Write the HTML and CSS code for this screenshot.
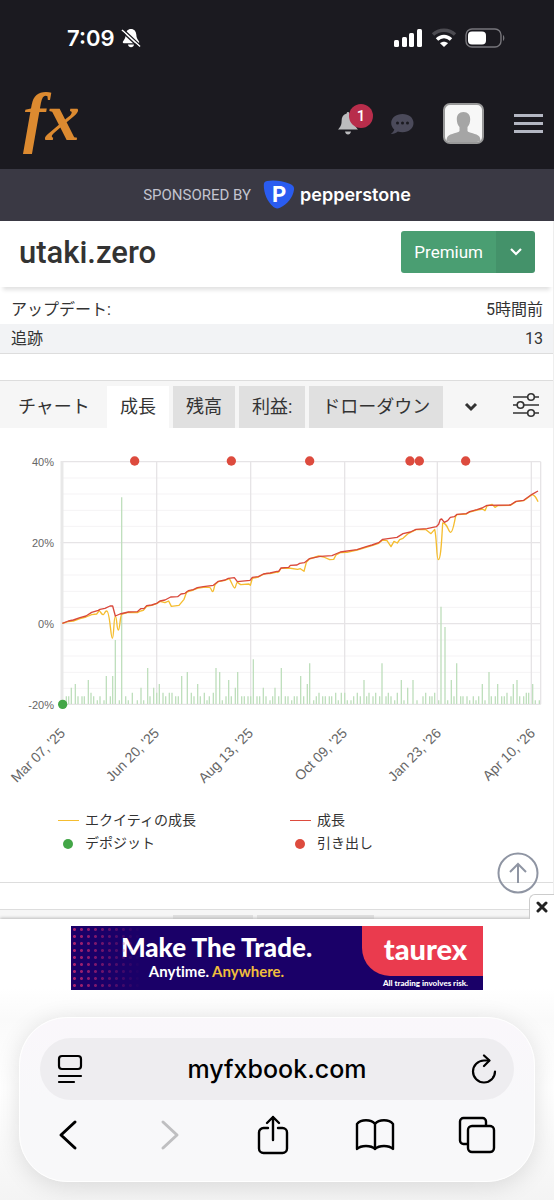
FILE: index.html
```html
<!DOCTYPE html>
<html lang="ja">
<head>
  <meta charset="UTF-8">
  <meta name="viewport" content="width=device-width, initial-scale=1.0">
  <title>utaki.zero - myfxbook</title>
  <link rel="stylesheet" href="styles.css">
</head>
<body>
  <!-- Status bar -->
  <div class="status-bar">
    <div class="status-left">
      <span class="time">7:09</span>
      <svg width="20" height="20" viewBox="0 0 20 20" fill="#fff">
        <path d="M10 1c-3.300 0-5 2.300-5.300 5.600C4.500 10 3.800 11 2 13.600c-.5.8-.2 1.600.8 1.600h14.400c1 0 1.300-.8.8-1.600-1.800-2.600-2.500-3.600-2.700-7C15 3.300 13.300 1 10 1z"/>
        <path d="M7 16.600h6c-.3 1.800-1.400 2.700-3 2.700s-2.700-.9-3-2.700z"/>
        <path d="M2 1.200l17 16" stroke="#1b1a20" stroke-width="1.600"/>
        <path d="M1 2l18 16.500" stroke="#fff" stroke-width="1.600"/>
        <path d="M1 4l17 15.700" stroke="#1b1a20" stroke-width="1.400"/>
      </svg>
    </div>
    <div class="status-right">
      <svg width="30" height="20" viewBox="0 0 30 20" fill="#fff">
        <rect x="1" y="12" width="5" height="7" rx="1.500"/>
        <rect x="9" y="9" width="5" height="10" rx="1.500"/>
        <rect x="16" y="5" width="5" height="14" rx="1.500"/>
        <rect x="24" y="1" width="5" height="18" rx="1.500"/>
      </svg>
      <svg width="26" height="20" viewBox="0 0 26 20" fill="none">
        <path d="M2 6.500C8 .8 18 .8 24 6.500" stroke="#4c4b51" stroke-width="3.400"/>
        <path d="M6 11.500c4-4 10-4 14 0" stroke="#fff" stroke-width="3.400"/>
        <path d="M9 15.200c2.400-2 5.600-2 8 0L13 19z" fill="#fff"/>
      </svg>
      <svg width="40" height="20" viewBox="0 0 40 20" fill="none">
        <rect x="1" y="1" width="35" height="18" rx="6" stroke="#77767b" stroke-width="1.400"/>
        <rect x="3" y="3.500" width="18" height="13" rx="4" fill="#fff"/>
        <path d="M38 7v6c1.800-.8 1.800-5.200 0-6z" fill="#77767b"/>
      </svg>
    </div>
  </div>

  <!-- Header -->
  <header class="header">
    <a href="#" class="logo">fx</a>
    <nav class="header-nav">
      <button class="icon-btn bell-btn" aria-label="通知">
        <svg width="22" height="26" viewBox="0 0 22 26" fill="#bcbcbe">
          <path d="M11 1c-.8 0-1.300.6-1.300 1.400C6.300 3.200 4.600 6 4.600 10c0 4.500-1.500 6-3.600 8.600h20c-2.100-2.600-3.600-4.100-3.600-8.600 0-4-1.700-6.800-5.100-7.600C12.300 1.600 11.800 1 11 1z"/>
          <path d="M8 20.500h6c-.4 2-1.500 3-3 3s-2.600-1-3-3z"/>
        </svg>
        <span class="badge">1</span>
      </button>
      <button class="icon-btn chat-btn" aria-label="メッセージ">
        <svg width="24" height="22" viewBox="0 0 24 22">
          <path d="M12.500 1C6 1 1.200 4.800 1.200 10c0 2.600 1.200 4.900 3.100 6.500C3.800 18.300 2.500 19.800.8 21c3 .1 5.300-.8 7-2.400 1.500.4 3 .6 4.700.6C19 19.200 23.500 15.200 23.500 10S19 1 12.500 1z" fill="#4b4a5a"/>
          <circle cx="7.500" cy="10" r="1.500" fill="#1b1a20"/>
          <circle cx="12.500" cy="10" r="1.500" fill="#1b1a20"/>
          <circle cx="17.500" cy="10" r="1.500" fill="#1b1a20"/>
        </svg>
      </button>
      <a href="#" class="avatar" aria-label="プロフィール">
        <svg width="37" height="37" viewBox="0 0 37 37" fill="#a5a5a5">
          <path d="M18.500 7c-4.400 0-6.700 3-6.700 7.200 0 3.300 1 6 2.700 7.800v4c-.8 2-9.300 2.400-11.800 5.400-.8 1.300-1.300 3.100-1.400 5.600h34.400c-.1-2.500-.6-4.300-1.400-5.600-2.500-3-11-3.400-11.800-5.400v-4c1.700-1.800 2.700-4.500 2.700-7.800C25.200 10 22.900 7 18.500 7z"/>
        </svg>
      </a>
      <button class="icon-btn menu-btn" aria-label="メニュー">
        <span></span><span></span><span></span>
      </button>
    </nav>
  </header>

  <!-- Sponsor -->
  <div class="sponsor">
    <span>SPONSORED BY</span>
    <a href="#" class="sponsor-link">
      <span class="sponsor-mark">
        <svg width="32" height="30" viewBox="0 0 32 30" fill="#2a5cf0">
          <path d="M4 1c6-1.200 15-.5 22 2.500 4 1.600 5.500 3.200 5 6.200-1 7.300-6.500 14.800-14 18-2.500 1.100-4.500.9-6.500-.7C4 21.500.8 13 .8 5 .8 2.500 1.800 1.400 4 1z"/>
        </svg>
        <b>P</b>
      </span>
      <span class="sponsor-name">pepperstone</span>
    </a>
  </div>

  <main class="page">
    <div class="title-bar">
      <h1>utaki.zero</h1>
      <div class="premium">
        <button class="premium-main">Premium</button>
        <button class="premium-toggle" aria-label="Premium メニュー">
          <svg width="14" height="10" viewBox="0 0 14 10" fill="none" stroke="#fff" stroke-width="2.200">
            <path d="M2 2l5 5 5-5"/>
          </svg>
        </button>
      </div>
    </div>

    <dl class="info">
      <div class="info-row"><dt>アップデート:</dt><dd>5時間前</dd></div>
      <div class="info-row striped"><dt>追跡</dt><dd>13</dd></div>
    </dl>

    <section class="panel">
      <div class="tabs">
        <h2>チャート</h2>
        <button class="tab active">成長</button>
        <button class="tab">残高</button>
        <button class="tab">利益:</button>
        <button class="tab">ドローダウン</button>
        <button class="tab-more" aria-label="その他">
          <svg width="14" height="10" viewBox="0 0 14 10" fill="none" stroke="#333" stroke-width="3">
            <path d="M2 2l5 5 5-5"/>
          </svg>
        </button>
        <button class="tab-settings" aria-label="設定">
          <svg width="28" height="26" viewBox="0 0 28 26" fill="none" stroke="#333" stroke-width="1.600">
            <path d="M1 5h14M23 5h4M1 13h4M12 13h15M1 21h14M23 21h4"/>
            <circle cx="19" cy="5" r="3.300"/>
            <circle cx="8.500" cy="13" r="3.300"/>
            <circle cx="19" cy="21" r="3.300"/>
          </svg>
        </button>
      </div>

      <svg class="chart" viewBox="0 0 553 371">
        <svg x="0" y="7" width="554" height="280" viewBox="0 0 1662 840" fill="none">
          <!-- grid -->
          <path class="grid-minor" d="M188 129H1622M188 177H1622M188 226H1622M188 274H1622M188 372H1622M188 420H1622M188 469H1622M188 517H1622M188 615H1622M188 663H1622M188 712H1622M188 760H1622"/>
          <path class="grid-major" d="M182 80H1622M182 323H1622M182 566H1622M182 808H1622M470 80V808M752 80V808M1034 80V808M1312 80V808M1594 80V808M1622 80V808"/>
          <path class="axis" d="M186 80V808"/>
          <!-- bars -->
          <path class="bars" d="M199 807V784M206 807V784M214 807V758M226 807V747M234 807V784M246 807V784M253 807V784M265 807V735M273 807V773M281 807V784M292 807V796M300 807V784M312 807V796M319 807V723M331 807V784M338 807V723M346 807V615M358 807V796M365 807V187M377 807V784M385 807V796M397 807V773M412 807V796M423 807V758M431 807V796M443 807V699M450 807V784M461 807V758M470 807V773M478 807V747M489 807V773M497 807V784M508 807V773M516 807V773M527 807V784M535 807V784M545 807V723M562 807V711M574 807V773M582 807V784M593 807V747M601 807V784M613 807V773M621 807V796M628 807V784M640 807V773M648 807V699M659 807V711M667 807V796M678 807V784M686 807V735M694 807V784M706 807V758M713 807V711M725 807V784M733 807V784M744 807V784M752 807V784M760 807V673M771 807V784M779 807V784M790 807V758M798 807V784M810 807V796M818 807V784M825 807V758"/>
          <path class="bars" transform="translate(831 0)" d="M5 807V784M13 807V699M25 807V784M33 807V784M44 807V796M52 807V784M60 807V784M71 807V723M80 807V784M91 807V747M98 807V685M110 807V796M118 807V784M126 807V773M137 807V784M145 807V784M157 807V784M164 807V784M176 807V773M184 807V796M193 807V773M203 807V773M211 807V796M222 807V796M230 807V784M241 807V773M250 807V784M261 807V735M269 807V784M276 807V773M288 807V784M296 807V773M308 807V784M315 807V685M327 807V784M334 807V773M342 807V784M353 807V796M361 807V773M373 807V735M381 807V796M392 807V758M408 807V735M420 807V796M438 807V784M446 807V773M458 807V784M465 807V784M473 807V773M485 807V796M492 807V515M504 807V576M512 807V796M523 807V735M531 807V784M539 807V685M551 807V784M558 807V784M570 807V784M578 807V796M589 807V784M597 807V796M605 807V784M616 807V747M624 807V796M636 807V711M643 807V784M655 807V784M662 807V747M674 807V784M682 807V784M690 807V773M702 807V784M709 807V747M720 807V735M728 807V784M740 807V784M748 807V773M755 807V773M767 807V747M775 807V796M787 807V796"/>
          <!-- equity growth -->
          <path class="equity" d="M187 565L205 560 220 558 240 551 258 546 275 539 290 537 298 527C304 534 306 540 310 539S314 528 320 528C330 528 332 610 337 610S341 544 346 544 350 585 355 585 360 538 366 537L385 532 412 533 422 528 430 526 440 514 455 511 470 506 480 499 495 503 506 498 514 514 537 511 552 493 560 471 580 465 592 460 610 457 628 457C634 457 634 470 638 470S642 452 646 448L655 440 675 436 688 431C694 440 700 459 704 459S708 442 712 442L722 449 747 447 751 451 757 430 775 426 790 418 800 415 810 416 831 411"/>
          <path class="equity" transform="translate(831 0)" d="M0 413L5 411 12 400 35 399 62 403 70 401 81 409 88 382 97 372 125 363 140 366 158 374 170 373 177 360 190 353 210 352 240 345 270 336 285 332 305 325 317 315 330 317 342 335 351 319 361 324 368 314 378 310 392 297 417 284 445 283 462 296 473 283C480 310 478 374 484 374S493 340 497 264C512 264 514 292 521 292S532 260 536 244L540 239 568 237 578 231 600 225 617 222 624 227 630 213 645 208 654 217 662 212 700 211 717 200 740 197 765 179C774 180 777 187 783 200"/>
          <!-- growth -->
          <path class="growth" d="M187 565L205 558 220 555 240 548 258 543 275 532 295 526 300 523 315 520 330 513 338 513 346 543 360 537 385 531 412 530 422 521 432 521 440 512 455 510 470 505 480 498 495 495 512 486 533 485 543 477 555 475 565 467 580 464 592 458 610 455 640 451 655 439 675 435 685 430 703 428 712 440 750 436 757 427 775 425 790 417 810 414 831 409 836 409 843 399 866 397 871 391 891 390 899 385 913 383 928 371 961 364 996 362 1021 351 1071 344 1101 334 1116 330 1136 323 1148 313 1191 307 1209 296 1231 291 1248 283 1281 281 1309 275 1316 268 1321 253 1325 252 1333 262 1343 257 1351 247 1363 245 1371 238 1399 236 1409 230 1431 224 1446 219 1461 211 1531 210 1548 199 1571 196 1596 178 1614 168"/>
          <g class="withdrawals">
            <circle cx="404" cy="78" r="14"/>
            <circle cx="694" cy="78" r="14"/>
            <circle cx="929" cy="78" r="14"/>
            <circle cx="1230" cy="78" r="14"/>
            <circle cx="1258" cy="78" r="14"/>
            <circle cx="1397" cy="78" r="14"/>
          </g>
          <circle class="deposit" cx="188" cy="808" r="14"/>
        </svg>
        <g class="y-labels">
          <text x="54" y="38">40%</text>
          <text x="54" y="119">20%</text>
          <text x="54" y="200">0%</text>
          <text x="54" y="281">-20%</text>
        </g>
        <g class="x-labels">
          <text transform="translate(66 306) rotate(-45)">Mar 07, '25</text>
          <text transform="translate(160 306) rotate(-45)">Jun 20, '25</text>
          <text transform="translate(254 306) rotate(-45)">Aug 13, '25</text>
          <text transform="translate(348 306) rotate(-45)">Oct 09, '25</text>
          <text transform="translate(442 306) rotate(-45)">Jan 23, '26</text>
          <text transform="translate(536 306) rotate(-45)">Apr 10, '26</text>
        </g>
      </svg>

      <ul class="legend">
        <li><i class="line yellow"></i>エクイティの成長</li>
        <li><i class="line red"></i>成長</li>
        <li><i class="dot green"></i>デポジット</li>
        <li><i class="dot red"></i>引き出し</li>
      </ul>
    </section>

    <section class="panel">
      <div class="tabs">
        <span class="next-tab"></span>
        <span class="next-tab next-tab-wide"></span>
      </div>
    </section>
  </main>

  <!-- Bottom overlay: ad and browser bar -->
  <div class="bottom">
    <a href="#" class="to-top" aria-label="トップへ">
      <svg width="42" height="42" viewBox="0 0 42 42" fill="none" stroke="#8f95a3" stroke-width="2">
        <circle cx="21" cy="21" r="19.500"/>
        <path d="M21 31V12M13 20l8-8 8 8"/>
      </svg>
    </a>
    <button class="ad-close" aria-label="閉じる">
      <svg width="12" height="12" viewBox="0 0 12 12" stroke="#222" stroke-width="3" stroke-linecap="round">
        <path d="M2 2l8 8M10 2l-8 8"/>
      </svg>
    </button>

    <a href="#" class="ad">
      <span class="ad-dots"></span>
      <span class="ad-copy">
        <strong>Make The Trade.</strong>
        <span>Anytime. <em>Anywhere.</em></span>
      </span>
      <span class="ad-brand">
        <b>taurex</b>
        <small>All trading involves risk.</small>
      </span>
    </a>

    <div class="browser-bar">
      <div class="address">
        <button class="icon-btn" aria-label="ページメニュー">
          <svg width="26" height="30" viewBox="0 0 26 30" fill="none" stroke="#000" stroke-width="2.200" stroke-linecap="round">
            <rect x="2" y="2" width="22" height="13" rx="3"/>
            <path d="M2 22h22M2 28h15"/>
          </svg>
        </button>
        <span class="url">myfxbook.com</span>
        <button class="icon-btn" aria-label="再読み込み">
          <svg width="26" height="30" viewBox="0 0 26 30" fill="none" stroke="#000" stroke-width="2.200" stroke-linecap="round" stroke-linejoin="round">
            <path d="M24 17.500A11 11 0 1 1 13 6.500h5"/>
            <path d="M13 1.500l5.500 5-5.500 5.500"/>
          </svg>
        </button>
      </div>
      <div class="browser-nav">
        <button class="icon-btn" aria-label="戻る">
          <svg width="20" height="32" viewBox="0 0 20 32" fill="none" stroke="#000" stroke-width="3" stroke-linecap="round" stroke-linejoin="round">
            <path d="M17 3L3 16l14 13"/>
          </svg>
        </button>
        <button class="icon-btn" aria-label="進む" disabled>
          <svg width="20" height="32" viewBox="0 0 20 32" fill="none" stroke="#bfbfc1" stroke-width="3" stroke-linecap="round" stroke-linejoin="round">
            <path d="M3 3l14 13L3 29"/>
          </svg>
        </button>
        <button class="icon-btn" aria-label="共有">
          <svg width="32" height="40" viewBox="0 0 32 40" fill="none" stroke="#000" stroke-width="2.400" stroke-linecap="round" stroke-linejoin="round">
            <path d="M11 13H6.500A4.500 4.500 0 0 0 2 17.500v16A4.500 4.500 0 0 0 6.500 38h19a4.500 4.500 0 0 0 4.500-4.500v-16a4.500 4.500 0 0 0-4.500-4.500H21"/>
            <path d="M16 25V2M10 8l6-6 6 6"/>
          </svg>
        </button>
        <button class="icon-btn" aria-label="ブックマーク">
          <svg width="40" height="34" viewBox="0 0 40 34" fill="none" stroke="#000" stroke-width="2.400" stroke-linecap="round" stroke-linejoin="round">
            <path d="M20 6C16 1 6 1 2 6v25c4-4 14-4 18 0 4-4 14-4 18 0V6C34 1 24 1 20 6zM20 6v25"/>
          </svg>
        </button>
        <button class="icon-btn" aria-label="タブ">
          <svg width="38" height="38" viewBox="0 0 38 38" fill="none" stroke="#000" stroke-width="2.400" stroke-linejoin="round">
            <path d="M10 28H5.500A3.500 3.500 0 0 1 2 24.500v-19A3.500 3.500 0 0 1 5.500 2h19A3.500 3.500 0 0 1 28 5.500V10"/>
            <rect x="10" y="10" width="26" height="26" rx="4"/>
          </svg>
        </button>
      </div>
    </div>
  </div>
</body>
</html>
```
FILE: styles.css
```css
* {
  box-sizing: border-box;
}

body {
  margin: 0;
  font-family: Roboto, "Noto Sans CJK JP", sans-serif;
  background-color: #fff;
  color: #333;
}

a {
  color: inherit;
  text-decoration: none;
}

button {
  margin: 0;
  padding: 0;
  border: none;
  background: none;
  color: inherit;
  font-family: inherit;
  cursor: pointer;
}

svg {
  display: block;
}

.icon-btn {
  display: flex;
  align-items: center;
  justify-content: center;
}

/* Status bar */
.status-bar {
  display: flex;
  justify-content: space-between;
  align-items: center;
  height: 76px;
  padding: 0 49px 0 67px;
  background-color: #1b1a20;
  color: #fff;
}

.status-left,
.status-right {
  display: flex;
  align-items: center;
  gap: 6px;
}

.status-right {
  gap: 8px;
}

.time {
  font-family: Inter, sans-serif;
  font-size: 22px;
  font-weight: 600;
}

/* Header */
.header {
  display: flex;
  justify-content: space-between;
  align-items: center;
  height: 93px;
  padding: 0 11px 0 20px;
  background-color: #1b1a20;
}

.logo {
  padding: 0 0 12px 3px;
  color: #dc8a30;
  font-family: "Liberation Serif", serif;
  font-size: 68px;
  font-style: italic;
  font-weight: bold;
  line-height: 76px;
}

.header-nav {
  display: flex;
  align-items: center;
  padding-top: 2px;
}

.bell-btn {
  position: relative;
  margin-right: 31px;
}

.badge {
  position: absolute;
  top: -7px;
  left: 12px;
  width: 24px;
  height: 24px;
  border-radius: 50%;
  background-color: #b82d4b;
  color: #fff;
  font-size: 15px;
  font-weight: 500;
  line-height: 24px;
  text-align: center;
}

.chat-btn {
  margin-right: 29px;
}

.avatar {
  margin-right: 30px;
  border: 2px solid #999;
  border-radius: 7px;
  background-color: #f7f7f7;
  overflow: hidden;
}

.menu-btn {
  flex-direction: column;
  gap: 5px;
  width: 29px;
}

.menu-btn span {
  width: 100%;
  height: 3px;
  background-color: #b4b7c3;
}

/* Sponsor */
.sponsor {
  display: flex;
  justify-content: center;
  align-items: center;
  gap: 12px;
  height: 52px;
  background-color: #3a3944;
  color: #c3c4cf;
  font-size: 15px;
}

.sponsor-link {
  display: flex;
  align-items: center;
  gap: 5px;
  color: #fff;
}

.sponsor-mark {
  position: relative;
}

.sponsor-mark b {
  position: absolute;
  top: 0;
  left: 0;
  width: 100%;
  font-family: Inter, sans-serif;
  font-size: 22px;
  line-height: 28px;
  text-align: center;
}

.sponsor-name {
  font-family: Inter, sans-serif;
  font-size: 18px;
  font-weight: 600;
  line-height: 24px;
}

/* Page */
.page {
  border-right: 1px solid #eee;
}

.title-bar {
  display: flex;
  justify-content: space-between;
  align-items: center;
  height: 66px;
  padding: 0 18px 4px 19px;
  box-shadow: 0 6px 4px -3px #e2e2e2;
}

.title-bar h1 {
  margin: 0;
  font-size: 31px;
  font-weight: 500;
}

.premium {
  display: flex;
  height: 42px;
  border-radius: 3px;
  overflow: hidden;
  color: #fff;
}

.premium-main {
  padding: 0 13px;
  background-color: #4a9e72;
  font-size: 17px;
}

.premium-toggle {
  display: flex;
  align-items: center;
  justify-content: center;
  width: 39px;
  background-color: #44926a;
}

.info {
  margin: 0;
  padding-top: 8px;
  border-bottom: 1px solid #ddd;
  font-size: 16px;
  line-height: 29px;
}

.info-row {
  display: flex;
  justify-content: space-between;
  padding: 0 10px 0 11px;
}

.info-row dd {
  margin: 0;
}

.striped {
  background-color: #f2f3f5;
}

.panel {
  margin-top: 26px;
  border-top: 1px solid #ddd;
  border-bottom: 1px solid #ddd;
}

.tabs {
  display: flex;
  gap: 4px;
  height: 47px;
  padding: 5px 13px 0 0;
  background-color: #f6f6f6;
}

.tabs h2 {
  width: 103px;
  margin: 0;
  padding-left: 18px;
  font-size: 18px;
  font-weight: 400;
  line-height: 41px;
}

.tab {
  padding: 0 13px;
  background-color: #e0e0e0;
  font-size: 18px;
  line-height: 40px;
  white-space: nowrap;
}

.tab.active {
  background-color: #fff;
}

.tab-more {
  display: flex;
  align-items: center;
  margin-left: 17px;
}

.tab-settings {
  display: flex;
  align-items: center;
  margin-left: auto;
  padding-bottom: 4px;
}

/* Chart */
.chart {
  width: 100%;
  height: auto;
}

.grid-minor {
  stroke: #f5f3f5;
  stroke-width: 3;
}

.grid-major {
  stroke: #e6e4e6;
  stroke-width: 4;
}

.axis {
  stroke: #e8e8e8;
  stroke-width: 9;
}

.bars {
  stroke: #bfdfbd;
  stroke-width: 4;
}

.equity,
.growth {
  stroke-width: 4;
  stroke-linejoin: round;
}

.equity {
  stroke: #f5bd30;
}

.growth {
  stroke: #d9483b;
}

.withdrawals {
  fill: #dd4b3e;
}

.deposit {
  fill: #43a647;
}

.y-labels,
.x-labels {
  fill: #666;
  font-family: "Liberation Sans", sans-serif;
  text-anchor: end;
}

.y-labels {
  font-size: 11px;
}

.x-labels {
  font-size: 14px;
}

.legend {
  display: grid;
  grid-template-columns: 1fr 1fr;
  margin: 0;
  padding: 10px 31px 27px 58px;
  list-style: none;
  font-size: 14px;
  line-height: 23px;
}

.legend li {
  display: flex;
  align-items: center;
  gap: 6px;
}

.line {
  width: 21px;
  height: 1px;
}

.dot {
  width: 10px;
  height: 10px;
  margin: 0 6px 0 5px;
  border-radius: 50%;
}

.yellow {
  background-color: #f5bd30;
}

.red {
  background-color: #dd4b3e;
}

.green {
  background-color: #43a647;
}

.next-tab {
  width: 80px;
  margin-left: 173px;
  background-color: #e0e0e0;
}

.next-tab-wide {
  width: 117px;
  margin-left: 0;
}

/* Bottom overlay */
.bottom {
  position: fixed;
  left: 0;
  right: 0;
  bottom: 0;
  padding: 7px 19px 18px;
  background: linear-gradient(#fff 70px, #fafafa 100px, #fff 60%, #f4f4f4);
  box-shadow: 0 -1px 3px #bbb;
}

.to-top {
  position: absolute;
  top: -67px;
  right: 15px;
}

.ad-close {
  position: absolute;
  top: -25px;
  right: 0;
  display: flex;
  align-items: center;
  justify-content: center;
  width: 25px;
  height: 25px;
  border: 1px solid #ccc;
  border-right: none;
  border-bottom: none;
  border-radius: 6px 0 0 0;
  background-color: #fff;
}

.ad {
  position: relative;
  display: flex;
  width: 412px;
  max-width: 100%;
  height: 64px;
  margin: 0 auto 27px;
  background-color: #1a0068;
  color: #fff;
  font-family: Lato, sans-serif;
  font-variant-ligatures: none;
  overflow: hidden;
}

.ad-dots {
  position: absolute;
  top: 0;
  bottom: 0;
  left: 0;
  width: 70px;
  background: radial-gradient(circle, #b02470 1px, transparent 2px) 0 0 / 7px 7px;
  -webkit-mask-image: linear-gradient(to right, #000, transparent);
  mask-image: linear-gradient(to right, #000, transparent);
}

.ad-copy {
  display: flex;
  flex: 1;
  flex-direction: column;
  align-items: center;
  padding-top: 7px;
  font-size: 15px;
  font-weight: 700;
  line-height: 20px;
  white-space: nowrap;
}

.ad-copy strong {
  font-size: 26px;
  font-weight: 900;
  line-height: 28px;
}

.ad-copy em {
  color: #f0bd3c;
  font-style: normal;
}

.ad-brand {
  display: flex;
  flex-direction: column;
  width: 121px;
  text-align: center;
}

.ad-brand b {
  height: 50px;
  padding-left: 6px;
  border-radius: 0 0 0 28px;
  background-color: #ea3b4e;
  font-size: 29px;
  font-weight: 900;
  line-height: 46px;
}

.ad-brand small {
  padding-left: 6px;
  font-size: 8px;
  font-weight: 900;
  line-height: 14px;
}

.browser-bar {
  padding: 20px 20px 17px;
  border: 1px solid #fff;
  border-radius: 48px;
  background: linear-gradient(#faf7fb, #f8f8fa 50%, #f8f8f9);
  box-shadow: 0 4px 24px rgba(0, 0, 0, 0.12);
}

.address {
  display: flex;
  justify-content: space-between;
  align-items: center;
  height: 62px;
  padding: 0 17px;
  border-radius: 31px;
  background-color: #eeedf0;
}

.url {
  color: #000;
  font-family: Inter, sans-serif;
  font-size: 25px;
  font-weight: 500;
}

.browser-nav {
  display: flex;
  justify-content: space-between;
  align-items: center;
  height: 58px;
  margin-top: 6px;
  padding: 0 15px 0 6px;
}

.browser-nav .icon-btn {
  width: 44px;
  height: 44px;
}
```
